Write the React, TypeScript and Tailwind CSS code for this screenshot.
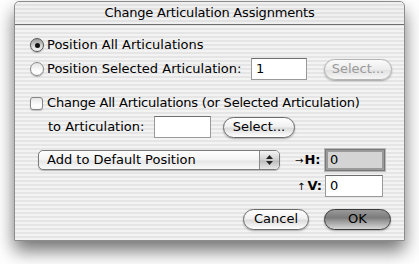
import React from "react";

const FONT = { fontFamily: '"Lucida Grande", "DejaVu Sans", sans-serif' };

function Radio({ on }: { on?: boolean }) {
  return (
    <span
      className={`relative flex h-[14px] w-[14px] shrink-0 items-center justify-center rounded-full border ${
        on
          ? "border-[#5a5a5a] bg-[linear-gradient(180deg,#9a9a9a,#e2e2e2_70%,#f4f4f4)]"
          : "border-[#8a8a8a] bg-[linear-gradient(180deg,#e4e4e4,#ffffff_70%,#f8f8f8)]"
      } shadow-[0_1px_1px_rgba(0,0,0,0.25)]`}
    >
      {on && <span className="h-[5px] w-[5px] rounded-full bg-[#111]" />}
    </span>
  );
}

function Field({ value, w, gray }: { value?: string; w: string; gray?: boolean }) {
  return (
    <div
      className={`${w} flex h-[22px] items-center border pl-[4px] text-[13px] ${
        gray
          ? "border-[#777] bg-[#d4d4d4] outline-[2px] outline-[#9a9a9a] outline -outline-offset-[3px] ring-1 ring-[#b8b8b8]"
          : "border-[#999] border-t-[#6f6f6f] bg-white"
      }`}
    >
      {value}
    </div>
  );
}

function Btn({ label, w, kind }: { label: string; w: string; kind?: "default" | "disabled" }) {
  const skin =
    kind === "default"
      ? "border-[#3a3a3a] bg-[linear-gradient(180deg,#9a9a9a_0%,#7c7c7c_40%,#9c9c9c_60%,#d6d6d6_100%)] text-black"
      : kind === "disabled"
      ? "border-[#b4b4b4] bg-[linear-gradient(180deg,#fafafa,#ececec_50%,#e2e2e2_55%,#f6f6f6)] text-[#9a9a9a]"
      : "border-[#6a6a6a] bg-[linear-gradient(180deg,#ffffff_0%,#f0f0f0_45%,#dcdcdc_55%,#ffffff_100%)] text-black";
  return (
    <div
      className={`${w} flex h-[21px] items-center justify-center rounded-full border text-[13px] shadow-[0_1px_2px_rgba(0,0,0,0.3)] ${skin}`}
    >
      {label}
    </div>
  );
}

export default function App() {
  return (
    <div className="h-[264px] w-[419px] overflow-hidden bg-white text-[13px] text-black" style={FONT}>
      <div className="ml-[14px] mt-[1px] flex h-[240px] w-[391px] flex-col rounded-t-[5px] border border-[#8c8c8c] bg-[image:repeating-linear-gradient(180deg,#f3f3f3_0px,#f3f3f3_2px,#e5e5e5_2px,#e5e5e5_4px)] shadow-[0_10px_18px_rgba(0,0,0,0.55)]">
        {/* title bar */}
        <div className="flex h-[23px] shrink-0 items-center justify-center rounded-t-[5px] border-b border-[#6e6e6e] bg-[image:repeating-linear-gradient(180deg,#f0f0f0_0px,#f0f0f0_2px,#e2e2e2_2px,#e2e2e2_4px)] text-[13px] tracking-[-0.2px]">
          Change Articulation Assignments
        </div>

        <div className="flex flex-col pl-[15px]">
          <div className="mt-[10px] flex h-[20px] items-center">
            <Radio on />
            <span className="ml-[3px]">Position All Articulations</span>
          </div>

          <div className="mt-[2px] flex h-[24px] items-center">
            <Radio />
            <span className="ml-[3px] w-[204px] shrink-0">Position Selected Articulation:</span>
            <Field value="1" w="w-[56px]" />
            <div className="ml-[17px]">
              <Btn label="Select..." w="w-[68px]" kind="disabled" />
            </div>
          </div>

          <div className="mt-[12px] flex h-[20px] items-center">
            <span className="h-[13px] w-[13px] shrink-0 rounded-[3px] border border-[#858585] bg-[linear-gradient(180deg,#e6e6e6,#ffffff_70%,#f6f6f6)] shadow-[0_1px_1px_rgba(0,0,0,0.2)]" />
            <span className="ml-[4px] tracking-[-0.2px]">Change All Articulations (or Selected Articulation)</span>
          </div>

          <div className="mt-[3px] flex h-[22px] items-center pl-[18px]">
            <span className="w-[106px] shrink-0">to Articulation:</span>
            <Field w="w-[57px]" />
            <div className="ml-[12px]">
              <Btn label="Select..." w="w-[72px]" />
            </div>
          </div>

          <div className="mt-[10px] flex h-[24px] items-center">
            <div className="ml-[8px] flex h-[20px] w-[242px] shrink-0 items-center overflow-hidden rounded-[5px] border border-[#7a7a7a] bg-[linear-gradient(180deg,#ffffff,#f2f2f2_50%,#e6e6e6_55%,#fafafa)] shadow-[0_1px_1px_rgba(0,0,0,0.25)]">
              <span className="flex-1 pl-[8px]">Add to Default Position</span>
              <span className="flex h-full w-[20px] flex-col items-center justify-center gap-[2px] border-l border-[#8a8a8a] bg-[linear-gradient(180deg,#f4f4f4,#cfcfcf_50%,#bdbdbd_55%,#e8e8e8)]">
                <svg width="7" height="4" viewBox="0 0 7 4">
                  <path d="M0 4 L3.5 0 L7 4 Z" fill="#222" />
                </svg>
                <svg width="7" height="4" viewBox="0 0 7 4">
                  <path d="M0 0 L3.5 4 L7 0 Z" fill="#222" />
                </svg>
              </span>
            </div>
            <span className="ml-[15px] flex w-[30px] shrink-0 items-center text-[13px]">
              <span className="text-[10px]">→</span>
              <span className="ml-[1px] font-bold">H:</span>
            </span>
            <Field value="0" w="w-[60px]" gray />
          </div>

          <div className="mt-[3px] flex h-[22px] items-center">
            <span className="ml-[267px] flex w-[28px] shrink-0 items-center text-[13px]">
              <span className="text-[10px]">↑</span>
              <span className="ml-[2px] font-bold">V:</span>
            </span>
            <Field value="0" w="w-[58px]" />
          </div>

          <div className="mt-[11px] flex h-[22px] items-center">
            <div className="ml-[213px]">
              <Btn label="Cancel" w="w-[66px]" />
            </div>
            <div className="ml-[15px]">
              <Btn label="OK" w="w-[67px]" kind="default" />
            </div>
          </div>
        </div>
      </div>
    </div>
  );
}
